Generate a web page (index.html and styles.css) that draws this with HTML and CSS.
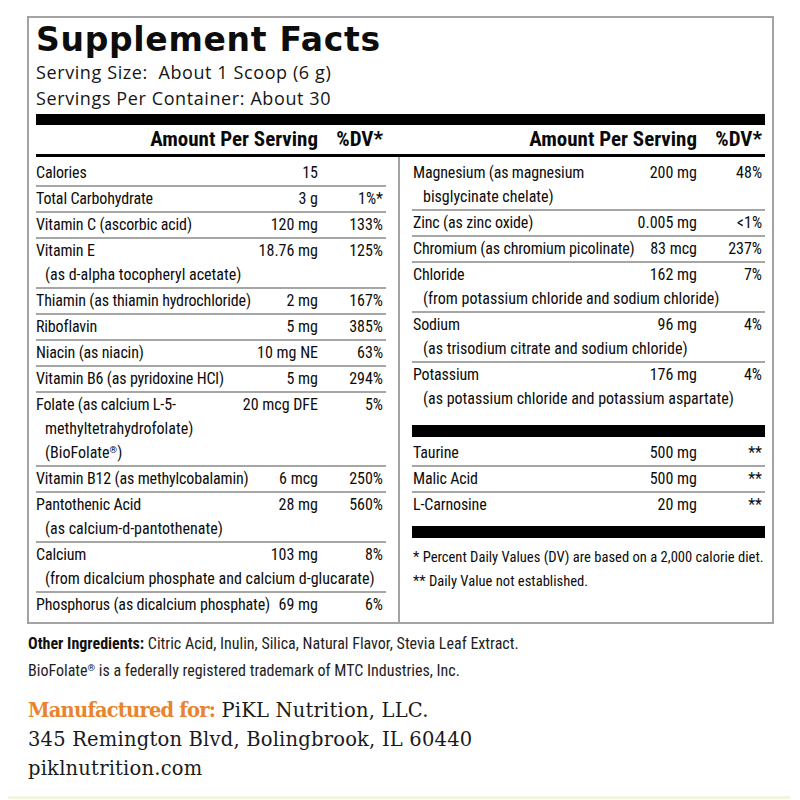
FILE: index.html
```html
<!DOCTYPE html>
<html lang="en">
<head>
<meta charset="utf-8">
<title>Supplement Facts</title>
<link rel="stylesheet" href="styles.css">
</head>
<body>
<div class="label">
  <h1 class="title">Supplement Facts</h1>
  <p class="serving">Serving Size:&nbsp; About 1 Scoop (6 g)</p>
  <p class="serving">Servings Per Container: About 30</p>
  <div class="bar"></div>
  <div class="head">
    <div class="half half-left"><span class="h-amt">Amount Per Serving</span><span class="h-dv">%DV*</span></div>
    <div class="half half-right"><span class="h-amt">Amount Per Serving</span><span class="h-dv">%DV*</span></div>
  </div>
  <div class="cols">
    <div class="col col-left">
      <div class="row first"><div class="line"><span class="name">Calories</span><span class="amt">15</span><span class="dv"></span></div></div>
      <div class="row"><div class="line"><span class="name">Total Carbohydrate</span><span class="amt">3 g</span><span class="dv">1%*</span></div></div>
      <div class="row"><div class="line"><span class="name">Vitamin C (ascorbic acid)</span><span class="amt">120 mg</span><span class="dv">133%</span></div></div>
      <div class="row"><div class="line"><span class="name">Vitamin E</span><span class="amt">18.76 mg</span><span class="dv">125%</span></div><div class="sub">(as d-alpha tocopheryl acetate)</div></div>
      <div class="row"><div class="line"><span class="name">Thiamin (as thiamin hydrochloride)</span><span class="amt">2 mg</span><span class="dv">167%</span></div></div>
      <div class="row"><div class="line"><span class="name">Riboflavin</span><span class="amt">5 mg</span><span class="dv">385%</span></div></div>
      <div class="row"><div class="line"><span class="name">Niacin (as niacin)</span><span class="amt">10 mg NE</span><span class="dv">63%</span></div></div>
      <div class="row"><div class="line"><span class="name">Vitamin B6 (as pyridoxine HCl)</span><span class="amt">5 mg</span><span class="dv">294%</span></div></div>
      <div class="row"><div class="line"><span class="name">Folate (as calcium L-5-</span><span class="amt">20 mcg DFE</span><span class="dv">5%</span></div><div class="sub">methyltetrahydrofolate)</div><div class="sub">(BioFolate<sup>®</sup>)</div></div>
      <div class="row"><div class="line"><span class="name">Vitamin B12 (as methylcobalamin)</span><span class="amt">6 mcg</span><span class="dv">250%</span></div></div>
      <div class="row"><div class="line"><span class="name">Pantothenic Acid</span><span class="amt">28 mg</span><span class="dv">560%</span></div><div class="sub">(as calcium-d-pantothenate)</div></div>
      <div class="row"><div class="line"><span class="name">Calcium</span><span class="amt">103 mg</span><span class="dv">8%</span></div><div class="sub">(from dicalcium phosphate and calcium d-glucarate)</div></div>
      <div class="row"><div class="line"><span class="name">Phosphorus (as dicalcium phosphate)</span><span class="amt">69 mg</span><span class="dv">6%</span></div></div>
    </div>
    <div class="col col-right">
      <div class="row first"><div class="line"><span class="name">Magnesium (as magnesium</span><span class="amt">200 mg</span><span class="dv">48%</span></div><div class="sub">bisglycinate chelate)</div></div>
      <div class="row"><div class="line"><span class="name">Zinc (as zinc oxide)</span><span class="amt">0.005 mg</span><span class="dv">&lt;1%</span></div></div>
      <div class="row"><div class="line"><span class="name">Chromium (as chromium picolinate)</span><span class="amt">83 mcg</span><span class="dv">237%</span></div></div>
      <div class="row"><div class="line"><span class="name">Chloride</span><span class="amt">162 mg</span><span class="dv">7%</span></div><div class="sub">(from potassium chloride and sodium chloride)</div></div>
      <div class="row"><div class="line"><span class="name">Sodium</span><span class="amt">96 mg</span><span class="dv">4%</span></div><div class="sub">(as trisodium citrate and sodium chloride)</div></div>
      <div class="row"><div class="line"><span class="name">Potassium</span><span class="amt">176 mg</span><span class="dv">4%</span></div><div class="sub">(as potassium chloride and potassium aspartate)</div></div>
      <div class="thick thick-a"></div>
      <div class="row first"><div class="line"><span class="name">Taurine</span><span class="amt">500 mg</span><span class="dv">**</span></div></div>
      <div class="row"><div class="line"><span class="name">Malic Acid</span><span class="amt">500 mg</span><span class="dv">**</span></div></div>
      <div class="row"><div class="line"><span class="name">L-Carnosine</span><span class="amt">20 mg</span><span class="dv">**</span></div></div>
      <div class="thick thick-b"></div>
      <p class="note">* Percent Daily Values (DV) are based on a 2,000 calorie diet.</p>
      <p class="note">** Daily Value not established.</p>
    </div>
  </div>
</div>
<div class="other">
  <p class="other-line"><b>Other Ingredients:</b> Citric Acid, Inulin, Silica, Natural Flavor, Stevia Leaf Extract.</p>
  <p class="other-line">BioFolate<sup>®</sup> is a federally registered trademark of MTC Industries, Inc.</p>
</div>
<div class="maker">
  <p class="maker-line"><span class="orange">Manufactured for:</span> PiKL Nutrition, LLC.</p>
  <p class="maker-line">345 Remington Blvd, Bolingbrook, IL 60440</p>
  <p class="maker-line">piklnutrition.com</p>
</div>
<div class="strip"></div>
</body>
</html>
```

FILE: styles.css
```css
* { box-sizing: border-box; }
html, body { margin: 0; padding: 0; background: #ffffff; color: #111111; }
body { width: 800px; height: 800px; overflow: hidden; }
p { margin: 0; }

.label {
  margin: 16px 0 0 27px;
  width: 747px;
  height: 608px;
  border: 2px solid #a3a3a3;
  padding: 0 7px;
  overflow: hidden;
}

.title {
  margin: 0;
  padding-top: 4px;
  font-family: "DejaVu Sans", sans-serif;
  font-weight: 700;
  font-size: 33px;
  line-height: 36px;
  letter-spacing: 0.7px;
  color: #0d0d0d;
  white-space: nowrap;
}

.serving {
  font-family: "Open Sans", sans-serif;
  font-size: 18px;
  line-height: 26px;
  letter-spacing: 0.6px;
  color: #151515;
  white-space: nowrap;
}
.title + .serving { margin-top: 1px; }

.bar { margin-top: 3px; height: 11px; background: #000; }

.head {
  display: flex;
  border-bottom: 3px solid #000;
  font-family: "Roboto Condensed", "Liberation Sans Narrow", Roboto, sans-serif;
  font-stretch: condensed;
  font-weight: 700;
  font-size: 21px;
  line-height: 29px;
  white-space: nowrap;
  color: #0a0a0a;
}
.half { display: grid; grid-template-columns: 1fr 68px; }
.half-left { width: 350px; margin-right: 26px; }
.half-right { flex: 1; }
.h-amt { text-align: right; }
.h-dv { text-align: right; padding-right: 3px; }

.cols {
  display: flex;
  font-family: "Roboto Condensed", "Liberation Sans Narrow", Roboto, sans-serif;
  font-stretch: condensed;
  font-size: 16px;
  line-height: 24px;
  color: #0c0c0c;
}
.col-left { width: 350px; margin-right: 12px; }
.col-right { flex: 1; border-left: 2px solid #a3a3a3; padding-left: 12px; height: 467px; }

.row + .row { border-top: 2px solid #a6a6a6; }
.row.first { padding-top: 4px; }
.line { display: grid; grid-template-columns: 1fr auto 68px; white-space: nowrap; }
.name { letter-spacing: -0.15px; }
.col-right .line .name { padding-left: 1px; }
.amt { text-align: right; }
.dv { text-align: right; padding-right: 3px; }
.sub { padding-left: 9px; white-space: nowrap; }
.col-right .sub { padding-left: 11px; }

sup { font-size: 60%; line-height: 0; vertical-align: 0.5em; }

.thick { height: 12px; background: #000; }
.thick-a { margin-top: 14px; }
.thick-b { margin-top: 9px; margin-bottom: 7px; }
.note { font-size: 14.6px; line-height: 24px; padding-left: 1px; white-space: nowrap; }

.other {
  margin: 6px 0 0 28px;
  font-family: "Roboto Condensed", "Liberation Sans Narrow", Roboto, sans-serif;
  font-stretch: condensed;
  font-size: 16px;
  line-height: 27px;
  color: #1e1e1e;
  white-space: nowrap;
}
.other b { font-weight: 700; color: #111; }

.maker {
  margin: 12px 0 0 28px;
  font-family: "DejaVu Serif", serif;
  font-size: 19.5px;
  line-height: 29px;
  letter-spacing: 0.2px;
  color: #1a1a1a;
  white-space: nowrap;
}
.orange { color: #e8842f; font-weight: 700; letter-spacing: -0.8px; }

.strip { margin: 13px 10px 0 8px; height: 3px; background: #f3f5e3; }
```
